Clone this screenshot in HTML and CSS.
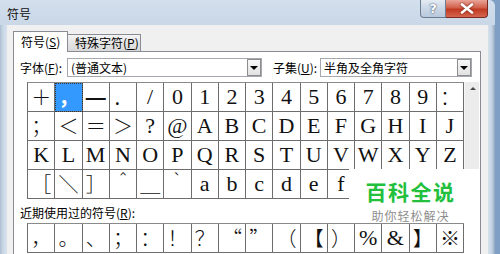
FILE: index.html
```html
<!DOCTYPE html>
<html lang="zh-CN">
<head>
<meta charset="utf-8">
<title>符号</title>
<link rel="stylesheet" href="styles.css">
</head>
<body>
<div class="window">
  <div class="titlebar">
    <span class="title">符号</span>
    <div class="caption-btns">
      <div class="cbtn help">?</div>
      <div class="cbtn close">
        <svg width="14" height="11" viewBox="0 0 14 11"><path d="M2 1.5 L12 9.5 M12 1.5 L2 9.5" stroke="#fff" stroke-width="2.6" stroke-linecap="round"/></svg>
      </div>
    </div>
  </div>
  <div class="client">
    <div class="tabs">
      <div class="tab active">符号(<u>S</u>)</div>
      <div class="tab">特殊字符(<u>P</u>)</div>
    </div>
    <div class="panel">
      <div class="font-row">
        <span class="lbl">字体(<u>F</u>):</span>
        <div class="combo combo-font"><span class="combo-text">(普通文本)</span><span class="drop"><i></i></span></div>
        <span class="lbl lbl-subset">子集(<u>U</u>):</span>
        <div class="combo combo-subset"><span class="combo-text">半角及全角字符</span><span class="drop"><i></i></span></div>
      </div>
      <div class="grid-wrap">
        <div class="grid">
          <div class="c w">＋</div><div class="c w sel">，</div><div class="c dash">—</div><div class="c w">．</div>
          <div class="c">/</div><div class="c">0</div><div class="c">1</div><div class="c">2</div>
          <div class="c">3</div><div class="c">4</div><div class="c">5</div><div class="c">6</div>
          <div class="c">7</div><div class="c">8</div><div class="c">9</div><div class="c w">：</div>

          <div class="c w">；</div><div class="c w">＜</div><div class="c w">＝</div><div class="c w">＞</div>
          <div class="c">?</div><div class="c">@</div><div class="c">A</div><div class="c">B</div>
          <div class="c">C</div><div class="c">D</div><div class="c">E</div><div class="c">F</div>
          <div class="c">G</div><div class="c">H</div><div class="c">I</div><div class="c">J</div>

          <div class="c">K</div><div class="c">L</div><div class="c">M</div><div class="c">N</div>
          <div class="c">O</div><div class="c">P</div><div class="c">Q</div><div class="c">R</div>
          <div class="c">S</div><div class="c">T</div><div class="c">U</div><div class="c">V</div>
          <div class="c">W</div><div class="c">X</div><div class="c">Y</div><div class="c">Z</div>

          <div class="c w">［</div><div class="c w">＼</div><div class="c w">］</div><div class="c w">＾</div>
          <div class="c w">＿</div><div class="c w">｀</div><div class="c">a</div><div class="c">b</div>
          <div class="c">c</div><div class="c">d</div><div class="c">e</div><div class="c">f</div>
          <div class="c"></div><div class="c"></div><div class="c"></div><div class="c"></div>
        </div>
        <div class="scrollbar"><span class="up"></span></div>
      </div>
      <div class="recent-label">近期使用过的符号(<u>R</u>):</div>
      <div class="grid recent">
        <div class="c w">，</div><div class="c w">。</div><div class="c w">、</div><div class="c w">；</div>
        <div class="c w">：</div><div class="c w">！</div><div class="c w">？</div><div class="c w">“</div>
        <div class="c w">”</div><div class="c w">（</div><div class="c w">【</div><div class="c w">）</div>
        <div class="c">%</div><div class="c">&amp;</div><div class="c w">】</div><div class="c w">※</div>
      </div>
      <div class="watermark">
        <div class="wm-title">百科全说</div>
        <div class="wm-sub">助你轻松解决</div>
      </div>
    </div>
  </div>
</div>
</body>
</html>
```

FILE: styles.css
```css
* { box-sizing: border-box; }

body {
  margin: 0;
  width: 500px;
  height: 254px;
  overflow: hidden;
  background: linear-gradient(to right, #c4d6ea, #7f9fc4);
  font-family: "Noto Sans CJK SC", "Liberation Sans", sans-serif;
  font-size: 12px;
  color: #000;
}

.window {
  width: 495px;
  height: 254px;
  display: flex;
  flex-direction: column;
  border-top-right-radius: 6px;
  background: linear-gradient(to right, #aebfd3 0, #c9d7e6 3px, #d5e0ec 6px, #d5e0ec 488px, #c2d1e2 492px, #8ea4bd 495px);
}

.titlebar {
  height: 25px;
  display: flex;
  align-items: flex-start;
  background: linear-gradient(#d3dfec, #c9d7e7);
  border-top-right-radius: 6px;
}

.title {
  padding: 6px 0 0 7px;
  line-height: 16px;
  font-size: 12px;
  color: #111;
}

.caption-btns {
  margin-left: auto;
  margin-right: 7px;
  display: flex;
}

.cbtn {
  height: 18px;
  display: flex;
  align-items: center;
  justify-content: center;
  border: 1px solid #6b7d92;
  border-top: none;
}

.help {
  width: 26px;
  border-bottom-left-radius: 4px;
  background: linear-gradient(#e4ebf3, #c9d6e5 50%, #b9c9dc);
  color: #fff;
  font-family: "DejaVu Sans", sans-serif;
  font-weight: bold;
  font-size: 13px;
  text-shadow: 0 0 2px #4a5a70, 0 0 1px #4a5a70;
}

.close {
  width: 42px;
  border-left: none;
  border-color: #7a2a22;
  border-bottom-right-radius: 4px;
  background: linear-gradient(#e9a598, #d2604c 45%, #c13a22 55%, #d5664f);
}

.close svg { filter: drop-shadow(0 0 1px #6a1a10); }

.client {
  flex: 1;
  margin: 0 7px;
  background: #f0f0f0;
  padding: 6px 7px 0 6px;
  display: flex;
  flex-direction: column;
}

.tabs {
  height: 20px;
  display: flex;
  align-items: flex-end;
  position: relative;
  z-index: 2;
}

.tab {
  height: 17px;
  width: 73px;
  padding-left: 7px;
  line-height: 16px;
  border: 1px solid #898c95;
  border-left: none;
  border-bottom: none;
  background: linear-gradient(#f4f4f4, #e4e4e4 50%, #d9d9d9);
  white-space: nowrap;
}

.tab.active {
  width: 55px;
  height: 21px;
  margin-bottom: -1px;
  border-left: 1px solid #898c95;
  background: #fff;
  line-height: 20px;
}

u { text-decoration: underline; text-underline-offset: 1px; }

.panel {
  flex: 1;
  position: relative;
  background: #fff;
  border: 1px solid #898c95;
  border-bottom: none;
  padding: 6px 0 0 6px;
}

.font-row {
  height: 19px;
  display: flex;
  align-items: center;
}

.lbl {
  width: 47px;
  white-space: nowrap;
}

.lbl-subset { margin-left: 11px; }

.combo {
  height: 19px;
  display: flex;
  align-items: center;
  border: 1px solid #a5a8ae;
  background: #fff;
  padding: 0 0 0 3px;
}

.combo-font { width: 195px; }
.combo-subset { width: 152px; }

.combo-text {
  flex: 1;
  line-height: 17px;
  white-space: nowrap;
}

.drop {
  width: 14px;
  height: 17px;
  display: flex;
  align-items: center;
  justify-content: center;
  border: 1px solid #8d8d8d;
  background: linear-gradient(#f7f7f7, #e2e2e2);
}

.drop i {
  width: 0;
  height: 0;
  border-left: 4px solid transparent;
  border-right: 4px solid transparent;
  border-top: 4px solid #000;
}

.grid-wrap {
  display: flex;
  margin: 5px 0 0 7px;
}

.grid {
  display: grid;
  grid-template-columns: repeat(16, 27.25px);
  grid-auto-rows: 29px;
  border-left: 1px solid #6d6d6d;
  border-top: 1px solid #8a8a8a;
}

.c {
  border-right: 1px solid #6d6d6d;
  border-bottom: 1px solid #6d6d6d;
  display: flex;
  align-items: center;
  justify-content: center;
  font-family: "Liberation Serif", "Noto Sans CJK SC", serif;
  font-size: 22px;
  line-height: 1;
  color: #111;
}

.c.w {
  font-family: "Noto Sans CJK SC", sans-serif;
  font-size: 20px;
  font-weight: 300;
}

.c.dash {
  font-family: "Liberation Sans", sans-serif;
  font-weight: bold;
  font-size: 20px;
}

.c.sel {
  background: #3399ff;
  color: #fff;
  outline: 1px dotted #333;
  outline-offset: -1px;
  font-weight: bold;
}

.scrollbar {
  width: 15px;
  background: #ececec;
  border-left: 1px solid #f6f6f6;
  position: relative;
}

.scrollbar .up {
  position: absolute;
  left: 5px;
  top: 5px;
  width: 0;
  height: 0;
  border-left: 3px solid transparent;
  border-right: 3px solid transparent;
  border-bottom: 3px solid #4a4a4a;
}

.recent-label {
  margin: 6px 0 2px 0;
  line-height: 16px;
  white-space: nowrap;
}

.recent {
  margin-left: 7px;
  width: 437px;
}

.watermark {
  position: absolute;
  left: 335px;
  top: 117px;
  width: 131px;
  height: 53px;
  background: #fff;
  padding: 11px 8px 0 0;
  text-align: center;
}

.wm-title {
  font-size: 21px;
  font-weight: bold;
  line-height: 22px;
  color: #22c03c;
  letter-spacing: 1.5px;
}

.wm-sub {
  margin-top: 7px;
  font-size: 12px;
  line-height: 14px;
  color: #8e8e8e;
  letter-spacing: 1px;
}
```
